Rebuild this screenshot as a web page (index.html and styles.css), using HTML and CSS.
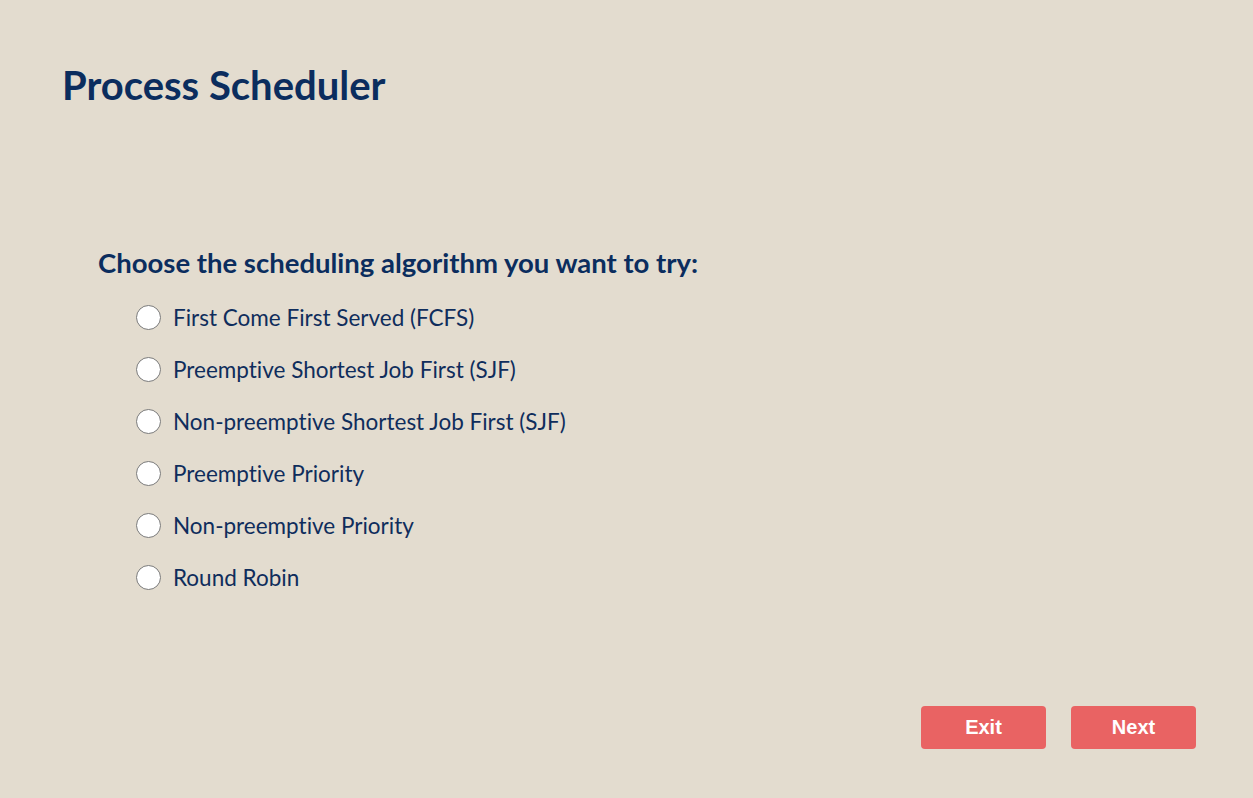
FILE: index.html
```html
<!DOCTYPE html>
<html lang="en">
<head>
<meta charset="utf-8">
<title>Process Scheduler</title>
<link rel="stylesheet" href="styles.css">
</head>
<body>
<div class="page">
  <h1 class="title">Process Scheduler</h1>
  <form class="chooser">
    <h2 class="question">Choose the scheduling algorithm you want to try:</h2>
    <ul class="options">
      <li><label class="option"><input type="radio" name="alg" class="radio"><span>First Come First Served (FCFS)</span></label></li>
      <li><label class="option"><input type="radio" name="alg" class="radio"><span>Preemptive Shortest Job First (SJF)</span></label></li>
      <li><label class="option"><input type="radio" name="alg" class="radio"><span>Non-preemptive Shortest Job First (SJF)</span></label></li>
      <li><label class="option"><input type="radio" name="alg" class="radio"><span>Preemptive Priority</span></label></li>
      <li><label class="option"><input type="radio" name="alg" class="radio"><span>Non-preemptive Priority</span></label></li>
      <li><label class="option"><input type="radio" name="alg" class="radio"><span>Round Robin</span></label></li>
    </ul>
  </form>
  <div class="actions">
    <button class="btn" type="button">Exit</button>
    <button class="btn" type="button">Next</button>
  </div>
</div>
</body>
</html>
```
FILE: styles.css
```css
html, body {
  margin: 0;
  padding: 0;
  background: #e3dccf;
}
body {
  font-family: Lato, "Open Sans", sans-serif;
  color: #0f2d5c;
  font-variant-ligatures: none;
}
.page {
  height: 798px;
  box-sizing: border-box;
  display: flex;
  flex-direction: column;
  padding: 61px 57px 49px 62px;
}
.title {
  margin: 0;
  font-size: 40px;
  font-weight: 700;
  line-height: 48px;
  color: #0b2d5e;
}
.chooser {
  margin: 138px 0 0 36px;
}
.question {
  margin: 0 0 12px 0;
  font-size: 27.5px;
  font-weight: 700;
  line-height: 32px;
  color: #0b2d5e;
}
.options {
  list-style: none;
  margin: 0;
  padding: 0 0 0 38px;
}
.option {
  display: flex;
  align-items: center;
  height: 52px;
  font-size: 22.5px;
  color: #0f2d5c;
  cursor: pointer;
}
.radio {
  appearance: none;
  -webkit-appearance: none;
  width: 25px;
  height: 25px;
  margin: 0 12px 0 0;
  border: 1px solid #7a7a7a;
  border-radius: 50%;
  background: #fff;
  box-sizing: border-box;
  flex: none;
}
.actions {
  margin-top: auto;
  display: flex;
  justify-content: flex-end;
  gap: 25px;
}
.btn {
  width: 125px;
  height: 43px;
  border: none;
  border-radius: 4px;
  background: #e96363;
  color: #fff;
  font-family: "Liberation Sans", Arial, sans-serif;
  font-weight: 700;
  font-size: 20px;
  cursor: pointer;
}
```
